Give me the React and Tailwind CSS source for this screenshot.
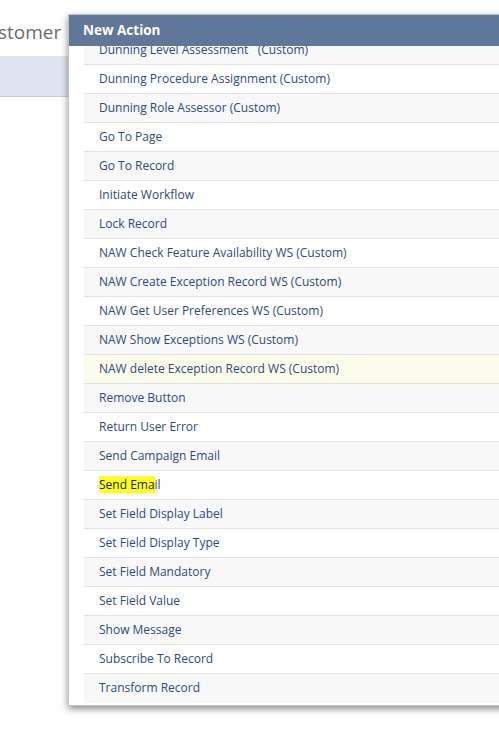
import React from "react";

const items = [
  "Dunning Level Assessment   (Custom)",
  "Dunning Procedure Assignment (Custom)",
  "Dunning Role Assessor (Custom)",
  "Go To Page",
  "Go To Record",
  "Initiate Workflow",
  "Lock Record",
  "NAW Check Feature Availability WS (Custom)",
  "NAW Create Exception Record WS (Custom)",
  "NAW Get User Preferences WS (Custom)",
  "NAW Show Exceptions WS (Custom)",
  "NAW delete Exception Record WS (Custom)",
  "Remove Button",
  "Return User Error",
  "Send Campaign Email",
  "Send Email",
  "Set Field Display Label",
  "Set Field Display Type",
  "Set Field Mandatory",
  "Set Field Value",
  "Show Message",
  "Subscribe To Record",
  "Transform Record",
];

export default function App() {
  return (
    <div className="relative w-[499px] h-[734px] bg-white overflow-hidden" style={{ fontFamily: '"Open Sans", "Liberation Sans", sans-serif' }}>
      <div className="pt-[19px] pl-0 h-[56px] -ml-[2px] text-[19px] leading-[26px] text-[#6b6b6b] whitespace-nowrap">stomer</div>
      <div className="h-[41px] w-full bg-[#dfe4ee] border-b border-[#c9ccd1]"></div>

      <div className="absolute left-[68px] top-[14px] w-[460px] h-[692px] bg-white border border-[#c4c4c4] shadow-[0_3px_7px_rgba(0,0,0,0.45)] flex flex-col">
        <div className="h-[31px] shrink-0 bg-[#607799] text-white font-bold text-[13.5px] leading-[31px] pl-[14px]">New Action</div>
        <div className="flex-1 overflow-hidden pl-[15px]">
          <div className="-mt-[10px]">
            {items.map((t, i) => {
              const hl = i === 11;
              const bg = hl ? "bg-[#fcfcec]" : i % 2 === 0 ? "bg-[#f8f8f8]" : "bg-white";
              return (
                <div
                  key={i}
                  className={`h-[29px] ${bg} ${i < items.length - 1 ? "border-b border-[#e2e2e2]" : ""} pl-[15px] text-[12px] leading-[28px] text-[#2f4a7a] whitespace-pre`}
                >
                  {t === "Send Email" ? (
                    <>
                      <span className="bg-[#ffff1e] text-[#1c1c1c]">Send Ema</span>il
                    </>
                  ) : (
                    t
                  )}
                </div>
              );
            })}
          </div>
        </div>
      </div>
    </div>
  );
}
